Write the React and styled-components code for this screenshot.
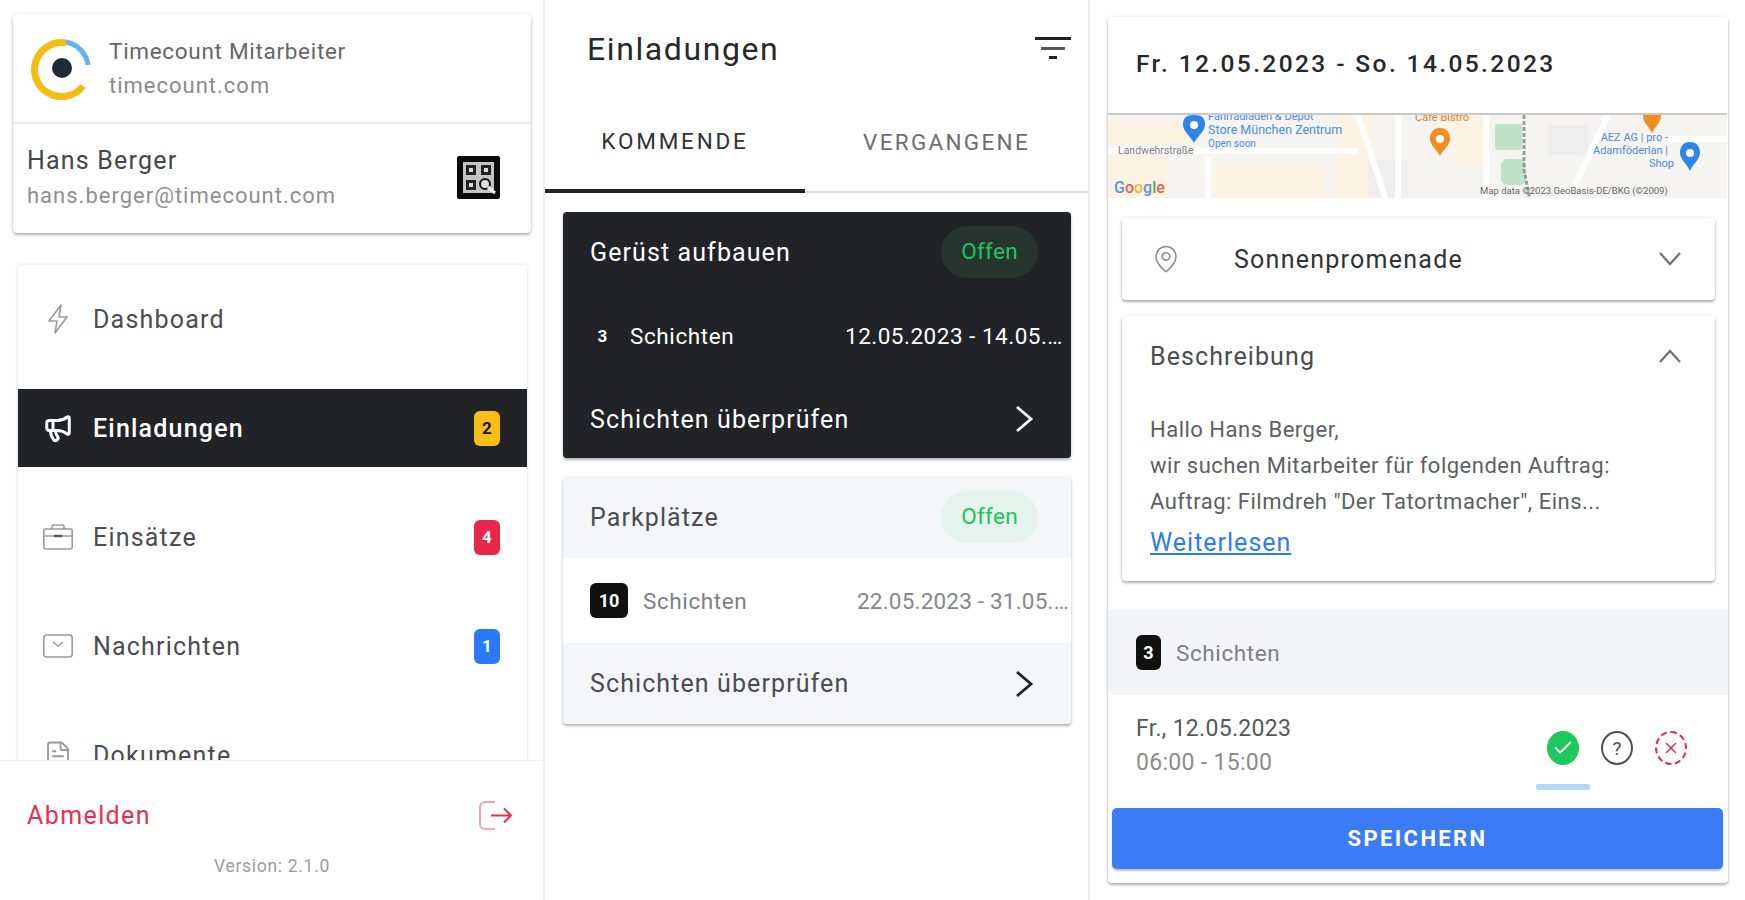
import React from 'react';
import styled, { createGlobalStyle } from 'styled-components';
import { Megaphone, FileText, MapPin, Check, X } from 'lucide-react';

const GlobalStyle = createGlobalStyle`
  html, body { margin: 0; padding: 0; background: #fff; }
  body { font-family: Roboto, "Liberation Sans", sans-serif; }
  * { box-sizing: border-box; }
`;

const Page = styled.div`
  display: grid;
  grid-template-columns: 545px 545px 655px;
  width: 1745px;
  height: 900px;
  overflow: hidden;
  color: #25272b;
`;

const Column = styled.section`
  display: flex;
  flex-direction: column;
  height: 900px;
  overflow: hidden;
  border-right: ${p => (p.$last ? 'none' : '2px solid #f0f0f0')};
`;

const Scroll = styled.div`
  flex: 1;
  min-height: 0;
  overflow: hidden;
  padding: 14px 16px 0 13px;
`;

const ProfileCard = styled.div`
  width: 518px;
  height: 219px;
  background: #fff;
  border-radius: 4px;
  box-shadow: 0 2px 3px rgba(0, 0, 0, .28), 0 0 4px rgba(0, 0, 0, .08);
`;

const AppRow = styled.div`
  display: flex;
  align-items: center;
  gap: 17px;
  height: 110px;
  padding-left: 17px;
  border-bottom: 2px solid #eeeeee;
`;

const Stack = styled.div`
  display: flex;
  flex-direction: column;
  gap: ${p => p.$gap || 8}px;
`;

const AppName = styled.div`
  font-size: 22.5px;
  letter-spacing: .7px;
  line-height: 26px;
  color: #666;
`;

const AppHost = styled.div`
  font-size: 22px;
  letter-spacing: 1px;
  line-height: 26px;
  color: #8a8a8a;
`;

const UserRow = styled.div`
  display: flex;
  align-items: center;
  justify-content: space-between;
  height: 107px;
  padding: 0 31px 0 14px;
`;

const UserName = styled.div`
  font-size: 25px;
  letter-spacing: 1.2px;
  line-height: 28px;
  color: #44464a;
`;

const UserMail = styled.div`
  font-size: 22px;
  letter-spacing: 1px;
  line-height: 26px;
  color: #8f8f8f;
`;

const Menu = styled.nav`
  display: flex;
  flex-direction: column;
  gap: 31px;
  width: 509px;
  margin: 32px 0 0 5px;
  padding-top: 15px;
  background: #fff;
  border-radius: 4px 4px 0 0;
  box-shadow: 0 0 4px rgba(0, 0, 0, .14);
`;

const MenuItem = styled.a`
  flex: none;
  display: flex;
  align-items: center;
  height: 78px;
  padding: 0 27px 0 24px;
  font-size: 25px;
  letter-spacing: 1.2px;
  background: ${p => (p.$active ? '#212327' : 'transparent')};
  color: ${p => (p.$active ? '#fff' : '#4a4c50')};
  font-weight: ${p => (p.$active ? 500 : 400)};
`;

const MenuIcon = styled.span`
  display: flex;
  justify-content: center;
  width: 32px;
  margin-right: 19px;
  color: ${p => (p.$active ? '#fff' : '#9a9a9a')};
`;

const MenuLabel = styled.span`
  flex: 1;
`;

const CountBadge = styled.span`
  display: flex;
  align-items: center;
  justify-content: center;
  width: 26px;
  height: 35px;
  border-radius: 6px;
  font-size: 17px;
  font-weight: 700;
  letter-spacing: 0;
  background: ${p => p.$bg};
  color: ${p => p.$color || '#fff'};
`;

const SideFooter = styled.footer`
  flex: none;
  height: 140px;
  padding: 36px 30px 0 27px;
  background: #fff;
  border-top: 1px solid #f0f0f0;
`;

const LogoutRow = styled.div`
  display: flex;
  align-items: center;
  justify-content: space-between;
  color: #ea2f4e;
  font-size: 25px;
  letter-spacing: 1.4px;
  height: 36px;
`;

const Version = styled.div`
  margin-top: 23px;
  text-align: center;
  font-size: 17.5px;
  letter-spacing: .7px;
  color: #9b9b9b;
  width: 490px;
`;

const TitleBar = styled.header`
  display: flex;
  align-items: center;
  justify-content: space-between;
  flex: none;
  height: 97px;
  padding: 0 17px 0 42px;
`;

const PageTitle = styled.h1`
  margin: 0;
  font-size: 32px;
  font-weight: 400;
  letter-spacing: 1.6px;
  color: #26282c;
`;

const Tabs = styled.div`
  display: flex;
  flex: none;
  height: 96px;
  border-bottom: 2px solid #d9d9d9;
`;

const Tab = styled.div`
  display: flex;
  align-items: center;
  justify-content: center;
  flex: ${p => (p.$active ? '0 0 260px' : '1')};
  margin-bottom: -2px;
  padding-bottom: ${p => (p.$active ? 5 : 7)}px;
  font-size: 22.5px;
  font-weight: 400;
  letter-spacing: ${p => (p.$active ? 2.8 : 2.3)}px;
  color: ${p => (p.$active ? '#303236' : '#6b6d70')};
  border-bottom: ${p => (p.$active ? '4px solid #212327' : 'none')};
`;

const CardList = styled.div`
  display: flex;
  flex-direction: column;
  gap: 18px;
  padding: 19px 17px 0 18px;
`;

const ShiftCard = styled.article`
  border-radius: 4px;
  overflow: hidden;
  background: ${p => (p.$dark ? '#212327' : '#f4f6f9')};
  color: ${p => (p.$dark ? '#fff' : '#4a4c50')};
  box-shadow: 0 2px 3px rgba(0, 0, 0, .3);
`;

const CardHead = styled.div`
  display: flex;
  align-items: center;
  justify-content: space-between;
  height: ${p => p.$h}px;
  padding: 0 ${p => p.$right}px 0 27px;
  font-size: 25px;
  letter-spacing: 1.1px;
`;

const CardMiddle = styled.div`
  display: flex;
  align-items: center;
  height: ${p => p.$h}px;
  padding-left: 27px;
  background: ${p => (p.$dark ? 'transparent' : '#fff')};
`;

const StatusPill = styled.span`
  display: flex;
  align-items: center;
  justify-content: center;
  width: 97px;
  height: 52px;
  padding-bottom: 3px;
  border-radius: 26px;
  font-size: 22.5px;
  letter-spacing: .3px;
  color: #22c162;
  background: ${p => (p.$dark ? '#26352d' : '#e4f3eb')};
`;

const BlackBadge = styled.span`
  display: flex;
  align-items: center;
  justify-content: center;
  flex: none;
  width: ${p => p.$w}px;
  height: 35px;
  border-radius: 6px;
  background: ${p => (p.$dark ? 'transparent' : '#111')};
  color: #fff;
  font-size: ${p => (p.$dark ? 17 : 18)}px;
  font-weight: 700;
`;

const ShiftCount = styled.span`
  margin-left: 15px;
  font-size: 22.5px;
  letter-spacing: .6px;
  color: ${p => (p.$dark ? '#fff' : '#7d7f82')};
`;

const DateRange = styled.span`
  margin-left: auto;
  width: ${p => p.$w}px;
  white-space: nowrap;
  overflow: hidden;
  text-overflow: ellipsis;
  font-size: 22.5px;
  letter-spacing: ${p => (p.$dark ? '.5px' : '.2px')};
  color: ${p => (p.$dark ? '#fff' : '#85878a')};
`;

const DetailCard = styled.div`
  display: flex;
  flex-direction: column;
  height: 866px;
  margin: 17px 17px 0 18px;
  background: #fff;
  border-radius: 4px;
  box-shadow: 0 2px 3px rgba(0, 0, 0, .3), 0 0 4px rgba(0, 0, 0, .08);
`;

const DetailHead = styled.div`
  display: flex;
  align-items: center;
  flex: none;
  height: 96px;
  padding: 0 0 4px 28px;
  font-size: 24.5px;
  font-weight: 500;
  letter-spacing: 2.4px;
  color: #26282c;
`;

const MapBox = styled.svg`
  display: block;
  flex: none;
  border-top: 2px solid #c9c9c9;
`;

const Panel = styled.div`
  margin: ${p => p.$top}px 13px 0 14px;
  background: #fff;
  border-radius: 4px;
  box-shadow: 0 2px 3px rgba(0, 0, 0, .3), 0 0 4px rgba(0, 0, 0, .08);
`;

const SelectRow = styled.div`
  display: flex;
  align-items: center;
  height: 82px;
  padding: 0 33px 0 29px;
  font-size: 25px;
  letter-spacing: 1.25px;
  color: #303236;
`;

const PinSlot = styled.span`
  display: flex;
  width: 83px;
  color: #8c8c8c;
`;

const PanelLabel = styled.span`
  flex: 1;
`;

const DescHead = styled.div`
  display: flex;
  align-items: center;
  height: 78px;
  padding: 2px 33px 0 28px;
  font-size: 25px;
  letter-spacing: 1.1px;
  color: #4a4c50;
`;

const DescBody = styled.div`
  padding: 18px 28px 0;
  font-size: 22px;
  letter-spacing: .5px;
  line-height: 36px;
  color: #5d5f62;
  height: 187px;
`;

const TextLine = styled.div`
  white-space: nowrap;
`;

const ReadMore = styled.a`
  display: inline-block;
  margin-top: 5px;
  color: #2f7bf6;
  font-size: 25px;
  letter-spacing: 1px;
  text-decoration: underline;
`;

const ShiftBand = styled.div`
  display: flex;
  align-items: center;
  flex: none;
  height: 85px;
  margin-top: 29px;
  padding-left: 28px;
  background: #f3f5f8;
  color: #4a4c50;
  font-size: 22.5px;
`;

const ShiftRow = styled.div`
  display: flex;
  align-items: flex-start;
  flex: none;
  height: 113px;
  padding: 17px 0 0 28px;
`;

const ShiftDate = styled.div`
  font-size: 23px;
  letter-spacing: .3px;
  line-height: 34px;
  color: #55575a;
`;

const ShiftTime = styled.div`
  font-size: 23px;
  letter-spacing: .3px;
  line-height: 34px;
  color: #8c8c8c;
`;

const Answers = styled.div`
  display: flex;
  margin-left: auto;
  padding-right: 30px;
`;

const Answer = styled.div`
  display: flex;
  flex-direction: column;
  align-items: center;
  width: 54px;
  padding-top: 19px;
`;

const AnswerCircle = styled.span`
  display: flex;
  align-items: center;
  justify-content: center;
  width: 32px;
  height: 34px;
  border-radius: 50%;
  background: ${p => p.$bg || 'transparent'};
  color: ${p => p.$color};
  border: ${p => (p.$line ? `2px ${p.$dashed ? 'dashed' : 'solid'} ${p.$color}` : 'none')};
  font-size: 19px;
  line-height: 1;
`;

const AnswerBar = styled.span`
  width: 54px;
  height: 6px;
  margin-top: 19px;
  border-radius: 2px;
  background: ${p => (p.$on ? '#b4daf8' : 'transparent')};
`;

const SaveButton = styled.button`
  flex: none;
  height: 61px;
  margin: 0 5px 0 4px;
  border: 0;
  border-radius: 5px;
  background: #3b7cf6;
  color: #fff;
  font-family: inherit;
  font-size: 22px;
  font-weight: 700;
  letter-spacing: 2.4px;
  box-shadow: 0 2px 2px rgba(0, 0, 0, .25);
`;

const Logo = () => (
  <svg width="62" height="64" viewBox="0 0 62 64">
    <path d="M53 50 A27 27 0 1 1 36 7" fill="none" stroke="#f4bd12" strokeWidth="7" />
    <path d="M36 6 A27 27 0 0 1 58 29" fill="none" stroke="#62b4ea" strokeWidth="5" />
    <circle cx="32" cy="32" r="10" fill="#1f2a38" />
  </svg>
);

const QrIcon = () => (
  <svg width="43" height="43" viewBox="0 0 43 43">
    <rect width="43" height="43" rx="2" fill="#0b0b0b" />
    <rect x="6" y="6" width="31" height="31" fill="#c4c4c4" />
    <path d="M9 9h10v10H9zM24 9h10v10H24zM9 24h10v10H9z" fill="#222" />
    <path d="M12 12h4v4h-4zM27 12h4v4h-4zM12 27h4v4h-4z" fill="#ddd" />
    <circle cx="28" cy="28" r="5" fill="#ddd" stroke="#111" strokeWidth="2" />
    <path d="M31 31l7 6" stroke="#eee" strokeWidth="3" />
  </svg>
);

const FilterIcon = () => (
  <svg width="36" height="24" viewBox="0 0 36 24">
    <rect x="0" y="0" width="36" height="3" fill="#222" />
    <rect x="6" y="10" width="24" height="3" fill="#555" />
    <rect x="14" y="19" width="8" height="3" fill="#222" />
  </svg>
);

const BoltIcon = () => (
  <svg width="24" height="30" viewBox="0 0 24 30" fill="none" stroke="currentColor" strokeWidth="1.6" strokeLinejoin="round">
    <path d="M15 1L3 17h8l-2 12 12-16h-8z" />
  </svg>
);

const CaseIcon = ({ size }) => (
  <svg width={size} height={size} viewBox="0 0 30 30" fill="none" stroke="currentColor" strokeWidth="1.6">
    <rect x="0.8" y="7" width="28.4" height="20" rx="2" />
    <path d="M0.8 14h28.4M9 7V4.5A1.5 1.5 0 0 1 10.5 3h9A1.5 1.5 0 0 1 21 4.5V7" />
    <path d="M11 14h8" stroke="#555" strokeWidth="2.4" />
  </svg>
);

const EnvelopeIcon = ({ size }) => (
  <svg width={size} height={size} viewBox="0 0 30 30" fill="none" stroke="currentColor" strokeWidth="1.6">
    <rect x="0.8" y="4" width="28.4" height="22" rx="3" />
    <path d="M10 11l5 4 5-4" />
  </svg>
);

const LogoutIcon = () => (
  <svg width="35" height="31" viewBox="0 0 35 31" fill="none" strokeWidth="2">
    <path d="M17 2H7a5 5 0 0 0-5 5v17a5 5 0 0 0 5 5h10" stroke="#f3a3b1" />
    <path d="M13 15.5h20M26 8.5l7 7-7 7" stroke="#ea2f4e" />
  </svg>
);

const ChevronRightBig = ({ color }) => (
  <svg width="20" height="28" viewBox="0 0 20 28" fill="none" stroke={color} strokeWidth="2.8">
    <path d="M3 2l14 12L3 26" />
  </svg>
);

const ChevronWide = ({ up }) => (
  <svg width="24" height="16" viewBox="0 0 24 16" fill="none" stroke="#6f7175" strokeWidth="2.2">
    <path d={up ? 'M2 14L12 3l10 11' : 'M2 2l10 11L22 2'} />
  </svg>
);

const MapPic = () => (
  <MapBox width="619" height="85" viewBox="0 0 619 83" preserveAspectRatio="none">
    <rect width="619" height="85" fill="#f6f4f1" />
    <path d="M0 6h92v22H0zM0 42h60v40H0zM106 50h110v35H106zM230 0h35v85h-35zM330 0h50v28h-50zM345 30h35v20h-35z" fill="#fdf3e2" />
    <path d="M260 45h40v40h-40zM440 10h40v30h-40z" fill="#eeeeee" />
    <path d="M0 36h250M100 42v43M250 0l28 85M290 0v85M378 0v85M500 0l-40 85M560 24h59" stroke="#fff" strokeWidth="6" fill="none" />
    <rect x="387" y="9" width="27" height="26" rx="2" fill="#bfe3c6" />
    <rect x="393" y="44" width="25" height="26" rx="6" fill="#bfe3c6" />
    <path d="M416 0v55l6 30" stroke="#9a9a9a" strokeWidth="3" strokeDasharray="4 2" fill="none" />
    <path d="M86 0c-10 0-11 5-11 10 0 6 8 12 11 18 3-6 11-12 11-18 0-5-1-10-11-10z" fill="#2f86e8" />
    <circle cx="86" cy="10" r="4" fill="#fff" />
    <text x="100" y="5" fontSize="11" fill="#4b8be0" fontFamily="Roboto">Fahrradladen &amp; Depot</text>
    <text x="100" y="19" fontSize="12.5" fill="#4b8be0" fontFamily="Roboto">Store München Zentrum</text>
    <text x="100" y="32" fontSize="10" fill="#4b8be0" fontFamily="Roboto">Open soon</text>
    <text x="10" y="39" fontSize="10.5" fill="#7b7b7b" fontFamily="Roboto">Landwehrstraße</text>
    <text x="307" y="6" fontSize="11" fill="#d9822b" fontFamily="Roboto">Café Bistro</text>
    <path d="M332 13c-8 0-10 6-10 11 0 6 7 11 10 17 3-6 10-11 10-17 0-5-2-11-10-11z" fill="#ee8f22" />
    <circle cx="332" cy="24" r="4" fill="#fff" />
    <path d="M544 0h-9c0 8 5 10 9 18 4-8 9-10 9-18z" fill="#ee8f22" />
    <path d="M582 27c-8 0-10 6-10 11 0 6 7 11 10 18 3-7 10-12 10-18 0-5-2-11-10-11z" fill="#2f86e8" />
    <circle cx="582" cy="38" r="4" fill="#fff" />
    <text x="567" y="45" fontSize="11" fill="#4b8be0" textAnchor="end" fontFamily="Roboto">
      <tspan x="560" dy="-19">AEZ AG | pro -</tspan>
      <tspan x="560" dy="13">Adamföderlan |</tspan>
      <tspan x="566" dy="13">Shop</tspan>
    </text>
    <text x="6" y="78" fontSize="16" fontWeight="500" fontFamily="Roboto">
      <tspan fill="#5a8fe8">G</tspan><tspan fill="#e5604e">o</tspan><tspan fill="#eeb93c">o</tspan><tspan fill="#5a8fe8">g</tspan><tspan fill="#55a868">l</tspan><tspan fill="#e5604e">e</tspan>
    </text>
    <text x="372" y="79" fontSize="9.5" fill="#666" fontFamily="Roboto">Map data ©2023 GeoBasis-DE/BKG (©2009)</text>
  </MapBox>
);

const menu = [
  { label: 'Dashboard', icon: BoltIcon },
  { label: 'Einladungen', icon: Megaphone, active: true, count: 2, bg: '#fbbf13', color: '#111' },
  { label: 'Einsätze', icon: CaseIcon, count: 4, bg: '#e8254a' },
  { label: 'Nachrichten', icon: EnvelopeIcon, count: 1, bg: '#2a7af5' },
  { label: 'Dokumente', icon: FileText },
];

const invitations = [
  { title: 'Gerüst aufbauen', dark: true, count: '3', dates: '12.05.2023 - 14.05.2023', dateW: 226, badgeW: 25, heights: [80, 88, 78] },
  { title: 'Parkplätze', count: '10', dates: '22.05.2023 - 31.05.2023', dateW: 214, badgeW: 38, heights: [82, 85, 81] },
];

export default function App() {
  return (
    <Page>
      <GlobalStyle />
      <Column>
        <Scroll>
          <ProfileCard>
            <AppRow>
              <Logo />
              <Stack $gap={9}>
                <AppName>Timecount Mitarbeiter</AppName>
                <AppHost>timecount.com</AppHost>
              </Stack>
            </AppRow>
            <UserRow>
              <Stack $gap={8}>
                <UserName>Hans Berger</UserName>
                <UserMail>hans.berger@timecount.com</UserMail>
              </Stack>
              <QrIcon />
            </UserRow>
          </ProfileCard>
          <Menu>
            {menu.map(({ label, icon: Icon, active, count, bg, color }) => (
              <MenuItem key={label} $active={active}>
                <MenuIcon $active={active}>
                  <Icon size={30} strokeWidth={active ? 2.4 : 1.5} />
                </MenuIcon>
                <MenuLabel>{label}</MenuLabel>
                {count && <CountBadge $bg={bg} $color={color}>{count}</CountBadge>}
              </MenuItem>
            ))}
          </Menu>
        </Scroll>
        <SideFooter>
          <LogoutRow>
            Abmelden
            <LogoutIcon />
          </LogoutRow>
          <Version>Version: 2.1.0</Version>
        </SideFooter>
      </Column>

      <Column>
        <TitleBar>
          <PageTitle>Einladungen</PageTitle>
          <FilterIcon />
        </TitleBar>
        <Tabs>
          <Tab $active>KOMMENDE</Tab>
          <Tab>VERGANGENE</Tab>
        </Tabs>
        <CardList>
          {invitations.map(card => (
            <ShiftCard key={card.title} $dark={card.dark}>
              <CardHead $h={card.heights[0]} $right={33}>
                {card.title}
                <StatusPill $dark={card.dark}>Offen</StatusPill>
              </CardHead>
              <CardMiddle $dark={card.dark} $h={card.heights[1]}>
                <BlackBadge $w={card.badgeW} $dark={card.dark}>{card.count}</BlackBadge>
                <ShiftCount $dark={card.dark}>Schichten</ShiftCount>
                <DateRange $dark={card.dark} $w={card.dateW}>{card.dates}</DateRange>
              </CardMiddle>
              <CardHead $h={card.heights[2]} $right={37}>
                Schichten überprüfen
                <ChevronRightBig color={card.dark ? '#fff' : '#222'} />
              </CardHead>
            </ShiftCard>
          ))}
        </CardList>
      </Column>

      <Column $last>
        <DetailCard>
          <DetailHead>Fr. 12.05.2023 - So. 14.05.2023</DetailHead>
          <MapPic />
          <Panel $top={20}>
            <SelectRow>
              <PinSlot><MapPin size={30} strokeWidth={1.3} /></PinSlot>
              <PanelLabel>Sonnenpromenade</PanelLabel>
              <ChevronWide />
            </SelectRow>
          </Panel>
          <Panel $top={16}>
            <DescHead>
              <PanelLabel>Beschreibung</PanelLabel>
              <ChevronWide up />
            </DescHead>
            <DescBody>
              <TextLine>Hallo Hans Berger,</TextLine>
              <TextLine>wir suchen Mitarbeiter für folgenden Auftrag:</TextLine>
              <TextLine>Auftrag: Filmdreh "Der Tatortmacher", Eins...</TextLine>
              <ReadMore>Weiterlesen</ReadMore>
            </DescBody>
          </Panel>
          <ShiftBand>
            <BlackBadge $w={25}>3</BlackBadge>
            <ShiftCount>Schichten</ShiftCount>
          </ShiftBand>
          <ShiftRow>
            <div>
              <ShiftDate>Fr., 12.05.2023</ShiftDate>
              <ShiftTime>06:00 - 15:00</ShiftTime>
            </div>
            <Answers>
              <Answer>
                <AnswerCircle $bg="#1fc75f" $color="#fff"><Check size={22} strokeWidth={2} /></AnswerCircle>
                <AnswerBar $on />
              </Answer>
              <Answer>
                <AnswerCircle $line $color="#4d4f52">?</AnswerCircle>
                <AnswerBar />
              </Answer>
              <Answer>
                <AnswerCircle $line $dashed $color="#e8254a"><X size={18} strokeWidth={2} /></AnswerCircle>
                <AnswerBar />
              </Answer>
            </Answers>
          </ShiftRow>
          <SaveButton>SPEICHERN</SaveButton>
        </DetailCard>
      </Column>
    </Page>
  );
}
